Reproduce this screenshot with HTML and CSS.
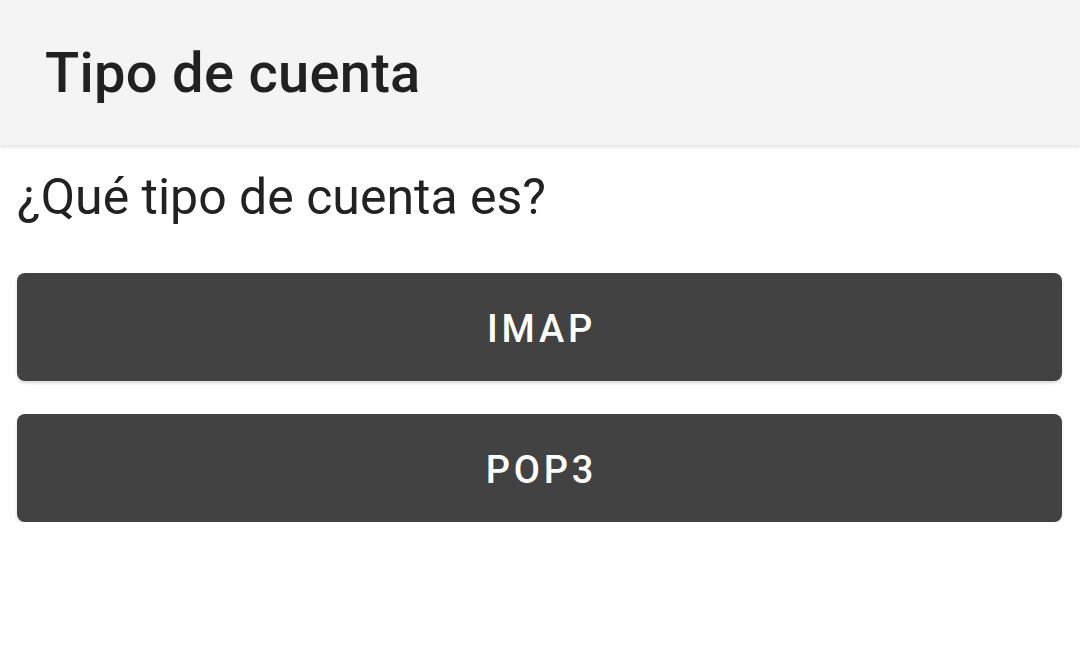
FILE: index.html
```html
<!DOCTYPE html>
<html lang="es">
<head>
<meta charset="utf-8">
<link rel="stylesheet" href="styles.css">
</head>
<body>
<header class="appbar">
  <h1 class="title">Tipo de cuenta</h1>
</header>
<main class="content">
  <p class="question">¿Qué tipo de cuenta es?</p>
  <button class="btn">IMAP</button>
  <button class="btn">POP3</button>
</main>
</body>
</html>
```

FILE: styles.css
```css
html, body {
  margin: 0;
  padding: 0;
  background: #ffffff;
  font-family: Roboto, "Noto Sans", sans-serif;
}
.appbar {
  height: 145px;
  background: #f4f4f4;
  box-shadow: 0 2px 4px rgba(0,0,0,0.12);
  display: flex;
  align-items: center;
  padding-left: 45px;
  position: relative;
}
.title {
  margin: 0;
  font-size: 56px;
  font-weight: 500;
  color: #212121;
  line-height: 1;
  letter-spacing: 0.3px;
}
.content {
  display: flex;
  flex-direction: column;
  padding: 0 18px 0 17px;
}
.question {
  margin: 17px 0 0 0;
  font-size: 50px;
  line-height: 70px;
  color: #222222;
}
.btn {
  margin-top: 41px;
  height: 108px;
  padding: 4px 0 0 4px;
  border: none;
  border-radius: 8px;
  background: #424242;
  color: #ffffff;
  font-family: Roboto, "Noto Sans", sans-serif;
  font-size: 38px;
  font-weight: 500;
  letter-spacing: 3.8px;
  box-shadow: 0 2px 3px rgba(0,0,0,0.15);
}
.btn + .btn {
  margin-top: 33px;
}
```
